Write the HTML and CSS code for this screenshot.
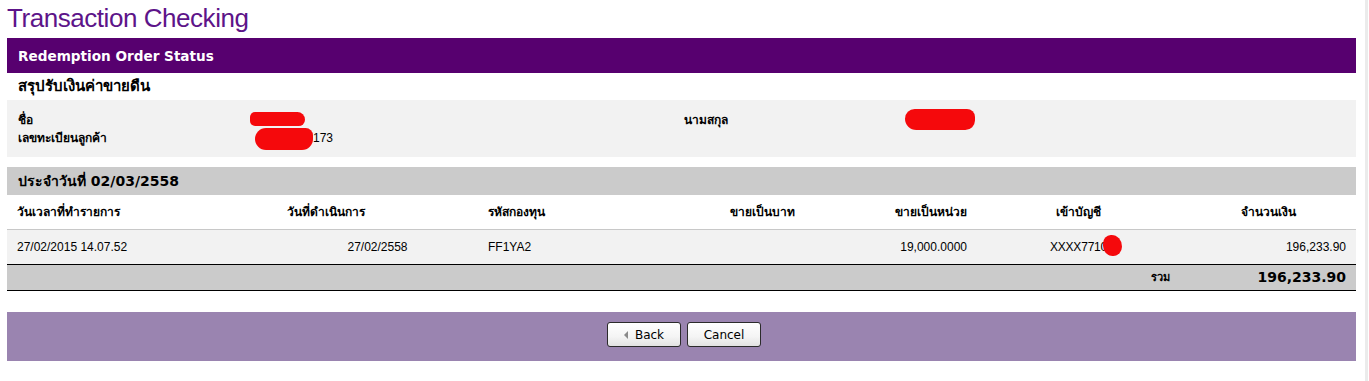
FILE: index.html
```html
<!DOCTYPE html>
<html lang="th">

<head>
  <meta charset="UTF-8" />
  <title>Transaction Checking</title>
  <link rel="stylesheet" href="styles.css">
</head>

<body>
  <div class="page">
    <h1 class="title">Transaction Checking</h1>

    <div class="panel-head">Redemption Order Status</div>
    <div class="sub-title">สรุปรับเงินค่าขายดืน</div>

    <div class="info">
      <span class="info-label">ชื่อ</span>
      <span class="info-value"><span class="blot blot-name"></span></span>
      <span class="info-label">นามสกุล</span>
      <span class="info-value"><span class="blot blot-surname"></span></span>
      <span class="info-label">เลขทะเบียนลูกค้า</span>
      <span class="info-value"><span class="blot blot-id"></span>173</span>
    </div>

    <div class="date-head">ประจำวันที่ 02/03/2558</div>

    <table class="orders">
      <colgroup>
        <col style="width: 270px">
        <col style="width: 201px">
        <col style="width: 200px">
        <col style="width: 127px">
        <col style="width: 172px">
        <col style="width: 203px">
        <col style="width: 176px">
      </colgroup>
      <thead>
        <tr>
          <th class="left">วันเวลาที่ทำรายการ</th>
          <th class="left">วันที่ดำเนินการ</th>
          <th class="left">รหัสกองทุน</th>
          <th class="right">ขายเป็นบาท</th>
          <th class="right">ขายเป็นหน่วย</th>
          <th class="center">เข้าบัญชี</th>
          <th class="center">จำนวนเงิน</th>
        </tr>
      </thead>
      <tbody>
        <tr>
          <td class="left">27/02/2015 14.07.52</td>
          <td class="center">27/02/2558</td>
          <td class="left">FF1YA2</td>
          <td class="right"></td>
          <td class="right">19,000.0000</td>
          <td class="center"><span class="acct">XXXX7710<span class="blot blot-acct"></span></span></td>
          <td class="right">196,233.90</td>
        </tr>
      </tbody>
      <tfoot>
        <tr>
          <td colspan="5"></td>
          <td class="right total-label">รวม</td>
          <td class="right total-value">196,233.90</td>
        </tr>
      </tfoot>
    </table>

    <div class="actions">
      <button class="btn btn-back"><span class="arrow"></span>Back</button>
      <button class="btn">Cancel</button>
    </div>
  </div>
</body>

</html>
```

FILE: styles.css
```css
body {
  margin: 0;
  min-height: 381px;
  background: linear-gradient(to right, #fff 1365px, #ebebeb 1365px, #ebebeb 1368px, #fff 1368px);
  font-family: Tahoma, 'DejaVu Sans', sans-serif;
  color: #000;
}

.page {
  width: 1349px;
  margin-left: 7px;
}

.title {
  margin: 0;
  height: 38px;
  font-family: 'Liberation Sans', Arial, sans-serif;
  font-size: 26px;
  font-weight: normal;
  line-height: 36px;
  color: #5d1489;
  letter-spacing: -0.45px;
}

.panel-head {
  height: 35px;
  padding-left: 11px;
  background: #57006f;
  color: #fff;
  font-family: 'DejaVu Sans', Verdana, sans-serif;
  font-weight: bold;
  font-size: 13.6px;
  line-height: 37px;
}

.sub-title {
  height: 27px;
  padding-left: 11px;
  font-weight: bold;
  font-size: 15px;
  line-height: 27px;
}

.info {
  display: grid;
  grid-template-columns: 237px 429px 221px 1fr;
  grid-auto-rows: 18px;
  height: 57px;
  box-sizing: border-box;
  padding: 11px 0 0 11px;
  background: #f2f2f2;
  font-size: 12px;
  line-height: 18px;
}

.info-label {
  font-weight: bold;
}

.info-value {
  position: relative;
  font-family: 'Liberation Sans', Arial, sans-serif;
  font-size: 12px;
}

.blot {
  background: #f5090c;
  border-radius: 10px;
}

.blot-name {
  position: absolute;
  left: -5px;
  top: 1px;
  width: 55px;
  height: 14px;
  border-radius: 8px 12px 10px 8px;
}

.blot-surname {
  position: absolute;
  left: 0;
  top: -2px;
  width: 70px;
  height: 21px;
  border-radius: 12px 10px 12px 14px;
}

.blot-id {
  display: inline-block;
  width: 58px;
  height: 22px;
  margin: -4px 0;
  vertical-align: middle;
  border-radius: 12px 8px 12px 12px;
}

.date-head {
  height: 28px;
  margin-top: 10px;
  padding-left: 11px;
  background: #cbcbcb;
  font-weight: bold;
  font-size: 14px;
  line-height: 28px;
}

.orders {
  width: 1349px;
  table-layout: fixed;
  border-collapse: separate;
  border-spacing: 0;
}

.orders th,
.orders td {
  padding: 0 10px;
  white-space: nowrap;
}

.orders th {
  font-size: 12px;
  font-weight: bold;
  line-height: 34px;
  border-bottom: 1px solid #c8c8c8;
}

.orders tbody td {
  background: #f2f2f2;
  font-family: 'Liberation Sans', Arial, sans-serif;
  font-size: 12px;
  line-height: 34px;
  border-bottom: 1px solid #000;
}

.orders tfoot td {
  background: #cbcbcb;
  line-height: 25px;
  border-bottom: 1px solid #000;
}

.left { text-align: left; }
.right { text-align: right; }
.center { text-align: center; }

.total-label {
  font-size: 11px;
  font-weight: bold;
}

.total-value {
  font-family: 'DejaVu Sans', Verdana, sans-serif;
  font-size: 14px;
  font-weight: bold;
}

.acct {
  position: relative;
  letter-spacing: -0.2px;
}

.blot-acct {
  position: absolute;
  right: -15px;
  top: -5px;
  width: 19px;
  height: 21px;
  border-radius: 45% 60% 50% 55%;
}

.actions {
  display: flex;
  justify-content: center;
  gap: 6px;
  margin-top: 21px;
  height: 49px;
  padding: 10px 0 0 5px;
  box-sizing: border-box;
  background: #9a84b0;
}

.btn {
  width: 74px;
  height: 25px;
  padding: 0;
  border: 1px solid #2b2b2b;
  border-radius: 3px;
  background: linear-gradient(#ffffff, #f4f4f4 60%, #e2e2e2);
  font-family: 'DejaVu Sans', Verdana, sans-serif;
  font-size: 12px;
  color: #000;
}

.arrow {
  display: inline-block;
  width: 0;
  height: 0;
  margin-right: 7px;
  border-top: 4px solid transparent;
  border-bottom: 4px solid transparent;
  border-right: 4px solid #8a8a8a;
  vertical-align: 0;
}
```
